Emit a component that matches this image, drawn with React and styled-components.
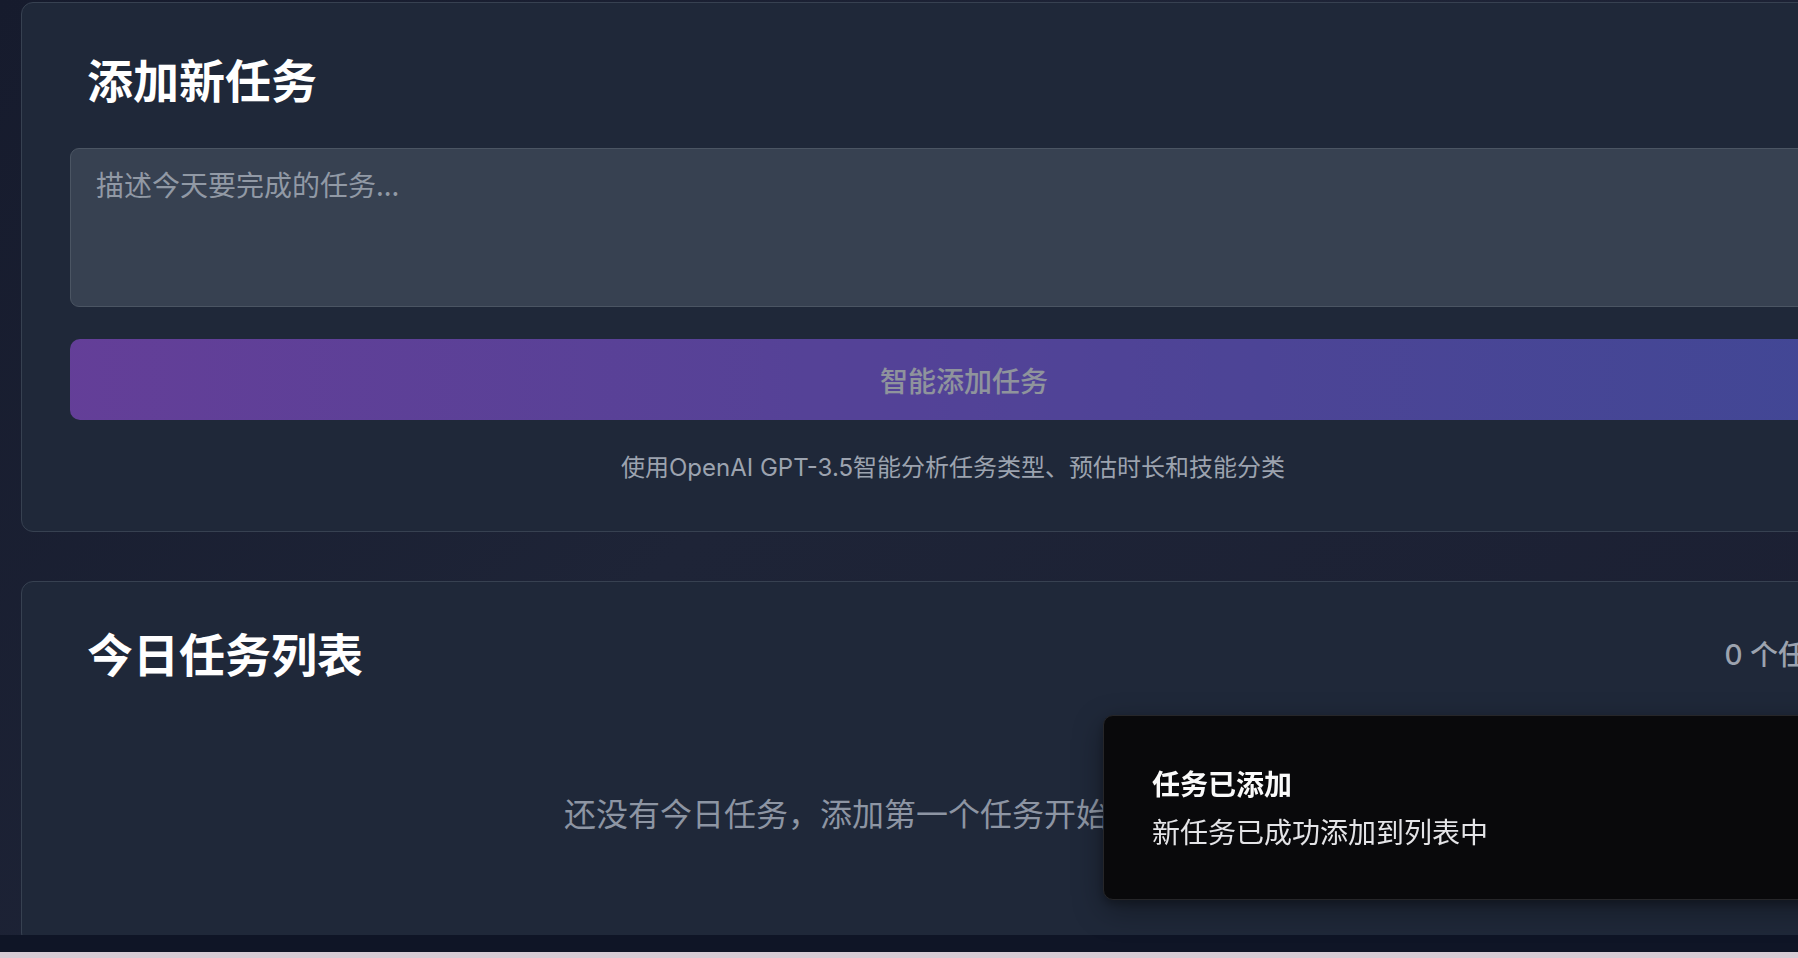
import React from 'react';
import styled, { createGlobalStyle } from 'styled-components';

const GlobalStyle = createGlobalStyle`
  html, body {
    margin: 0;
    padding: 0;
    overflow: hidden;
    background: #1a1f30;
  }
  body {
    font-family: Inter, "Noto Sans CJK SC", sans-serif;
    -webkit-font-smoothing: antialiased;
  }
  * {
    box-sizing: border-box;
  }
`;

const Shell = styled.div`
  height: 100vh;
  display: flex;
  flex-direction: column;
  overflow: hidden;
`;

const Main = styled.main`
  flex: 1;
  min-height: 0;
  overflow: hidden;
  background: linear-gradient(135deg, #161b2d 0%, #1e2437 45%, #1b1f32 100%);
`;

const Page = styled.div`
  width: 1928px;
  padding: 2px 21px 0;
  display: flex;
  flex-direction: column;
  gap: 49px;
`;

const Card = styled.section`
  width: 1886px;
  background: #1f2839;
  border: 1px solid #374151;
  border-radius: 12px;
  padding: ${({ $pt = 48 }) => $pt}px 48px ${({ $pb = 48 }) => $pb}px;
  display: flex;
  flex-direction: column;
`;

const CardHeader = styled.div`
  display: flex;
  align-items: center;
  justify-content: space-between;
  padding: 0 17px;
  margin-bottom: ${({ $gap }) => $gap}px;
`;

const Title = styled.h2`
  margin: 0;
  font-family: "Noto Sans CJK SC", sans-serif;
  font-size: 46px;
  line-height: 55px;
  font-weight: 700;
  color: #ffffff;
`;

const Count = styled.span`
  margin-right: 7px;
  font-family: Inter, "Noto Sans CJK SC", sans-serif;
  font-size: 28px;
  font-weight: 500;
  color: #9ca3af;
`;

const TaskInput = styled.textarea`
  display: block;
  width: 100%;
  height: 159px;
  resize: none;
  background: #374151;
  border: 1px solid #4b5563;
  border-radius: 9px;
  padding: 14px 25px;
  font-family: "Noto Sans CJK SC", sans-serif;
  font-size: 28px;
  line-height: 42px;
  color: #f3f4f6;
  outline: none;

  &::placeholder {
    color: #9199a5;
  }
`;

const SmartButton = styled.button`
  margin-top: 32px;
  height: 81px;
  width: 100%;
  border: none;
  border-radius: 10px;
  background: linear-gradient(90deg, #a855f7 0%, #6366f1 100%);
  opacity: 0.5;
  color: #ffffff;
  font-family: "Noto Sans CJK SC", sans-serif;
  font-size: 28px;
  font-weight: 500;
  cursor: not-allowed;
`;

const Hint = styled.p`
  margin: 30px 0 0;
  padding-right: 22px;
  text-align: center;
  font-family: Inter, "Noto Sans CJK SC", sans-serif;
  font-size: 24px;
  line-height: 36px;
  color: #9ca3af;
`;

const EmptyState = styled.p`
  margin: 0;
  padding: 0 0 60px;
  text-align: center;
  font-family: "Noto Sans CJK SC", sans-serif;
  font-size: 32px;
  line-height: 48px;
  color: #8d95a3;
`;

const BottomBar = styled.div`
  height: 17px;
  background: #0f1526;
`;

const Desk = styled.div`
  height: 6px;
  background: #d8ccd5;
`;

const Toast = styled.div`
  position: fixed;
  left: 1103px;
  top: 715px;
  width: 840px;
  height: 185px;
  background: #09090b;
  border: 1px solid #262629;
  border-radius: 10px;
  padding: 0 48px 2px;
  display: flex;
  flex-direction: column;
  justify-content: center;
  gap: 8px;
  box-shadow: 0 10px 30px rgba(0, 0, 0, 0.35), 0 4px 8px rgba(0, 0, 0, 0.25);
  font-family: "Noto Sans CJK SC", sans-serif;
`;

const ToastTitle = styled.div`
  font-size: 28px;
  line-height: 40px;
  font-weight: 700;
  color: #fafafa;
`;

const ToastText = styled.div`
  font-size: 28px;
  line-height: 40px;
  color: #e4e4e7;
`;

export default function App() {
  return (
    <>
      <GlobalStyle />
      <Shell>
        <Main>
          <Page>
            <Card $pb={45}>
              <CardHeader $gap={42}>
                <Title>添加新任务</Title>
              </CardHeader>
              <TaskInput placeholder="描述今天要完成的任务..." />
              <SmartButton disabled>智能添加任务</SmartButton>
              <Hint>使用OpenAI GPT-3.5智能分析任务类型、预估时长和技能分类</Hint>
            </Card>

            <Card $pt={43}>
              <CardHeader $gap={108}>
                <Title>今日任务列表</Title>
                <Count>0 个任务</Count>
              </CardHeader>
              <EmptyState>还没有今日任务，添加第一个任务开始规划你的一天吧！</EmptyState>
            </Card>
          </Page>
        </Main>
        <BottomBar />
        <Desk />
      </Shell>

      <Toast>
        <ToastTitle>任务已添加</ToastTitle>
        <ToastText>新任务已成功添加到列表中</ToastText>
      </Toast>
    </>
  );
}
